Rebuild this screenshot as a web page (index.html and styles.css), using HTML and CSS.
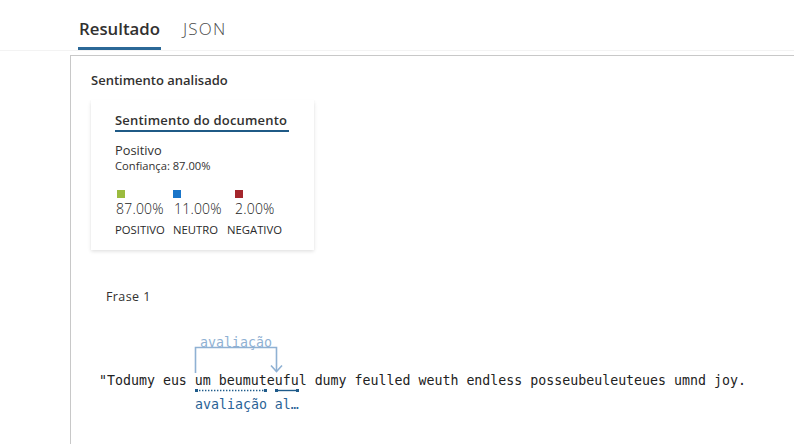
FILE: index.html
```html
<!DOCTYPE html>
<html lang="pt">
<head>
<meta charset="utf-8">
<link rel="stylesheet" href="styles.css">
</head>
<body>
<div class="tabs">
  <div class="tab active">Resultado</div>
  <div class="tab">JSON</div>
</div>
<div class="panel">
  <div class="section-title">Sentimento analisado</div>
  <div class="card">
    <div class="card-title">Sentimento do documento</div>
    <div class="label">Positivo</div>
    <div class="conf">Confiança: 87.00%</div>
    <div class="scores">
      <div class="score">
        <span class="swatch pos"></span>
        <span class="pct">87.00%</span>
        <span class="name">POSITIVO</span>
      </div>
      <div class="score">
        <span class="swatch neu"></span>
        <span class="pct">11.00%</span>
        <span class="name">NEUTRO</span>
      </div>
      <div class="score">
        <span class="swatch neg"></span>
        <span class="pct">2.00%</span>
        <span class="name">NEGATIVO</span>
      </div>
    </div>
  </div>
  <div class="frase">Frase 1</div>
  <div class="sentence">
    <span class="top-label">avaliação</span>
    <svg class="bracket" width="90" height="30" viewBox="0 0 90 30">
      <path d="M1.5 27 V1.5 H82.5 V25" fill="none" stroke="#8fb1d3" stroke-width="1.6"/>
      <path d="M77 19.5 L82.5 25.5 L88 19.5" fill="none" stroke="#8fb1d3" stroke-width="1.6"/>
    </svg>
    <span class="text">"Todumy eus um beumuteuful dumy feulled weuth endless posseubeuleuteues umnd joy.</span>
    <svg class="marks" width="110" height="6" viewBox="0 0 110 6">
      <rect x="0" y="1" width="3" height="3" fill="#1f5b8a"/>
      <line x1="4" y1="2.5" x2="69" y2="2.5" stroke="#1f5b8a" stroke-width="1.4" stroke-dasharray="1.4 1.6"/>
      <rect x="69" y="1" width="3" height="3" fill="#1f5b8a"/>
      <rect x="80" y="1" width="3" height="3" fill="#1f5b8a"/>
      <line x1="83" y1="2.5" x2="101" y2="2.5" stroke="#1f5b8a" stroke-width="1.4"/>
      <rect x="101" y="1" width="3" height="3" fill="#1f5b8a"/>
    </svg>
    <span class="bottom-label">avaliação al…</span>
  </div>
</div>
</body>
</html>
```
FILE: styles.css
```css
html, body {
  margin: 0;
  padding: 0;
  background: #fff;
}
body {
  font-family: "Open Sans", "Noto Sans", sans-serif;
  color: #323130;
  width: 794px;
  height: 444px;
  overflow: hidden;
}
.tabs {
  display: flex;
  gap: 22px;
  padding-left: 78px;
  height: 51px;
  border-bottom: 1px solid #f3f3f3;
  box-sizing: border-box;
  margin-bottom: 4px;
}
.tab {
  font-size: 17px;
  line-height: 20px;
  padding-top: 19px;
  color: #4d4d4d;
  font-weight: 300;
  letter-spacing: 1.2px;
}
.tab.active {
  color: #323130;
  font-weight: 600;
  font-size: 16.8px;
  letter-spacing: 0;
  border-bottom: 3px solid #2b6897;
  height: 28px;
  padding-left: 1px;
  padding-right: 1px;
}
.panel {
  margin-left: 70px;
  border-top: 1px solid #c8c8c8;
  border-left: 1px solid #c8c8c8;
  height: 400px;
  padding: 15px 0 0 20px;
  box-sizing: border-box;
}
.section-title {
  font-size: 13px;
  font-weight: 600;
  line-height: 18px;
}
.card {
  margin-top: 11px;
  width: 223px;
  height: 150px;
  box-sizing: border-box;
  padding: 12px 0 0 24px;
  box-shadow: 0 1.6px 3.6px rgba(0,0,0,0.13), 0 0.3px 0.9px rgba(0,0,0,0.11);
}
.card-title {
  width: fit-content;
  font-size: 13px;
  font-weight: 600;
  line-height: 17px;
  letter-spacing: 0.2px;
  padding-bottom: 1px;
  padding-right: 2px;
  border-bottom: 2px solid #1f5a86;
}
.label {
  margin-top: 10px;
  font-size: 12.8px;
  line-height: 16px;
}
.conf {
  font-size: 11.2px;
  line-height: 15px;
}
.scores {
  display: flex;
  margin-top: 17px;
}
.score {
  display: flex;
  flex-direction: column;
}
.score:nth-child(1) { width: 58px; }
.score:nth-child(2) { width: 54px; }
.swatch {
  width: 8px;
  height: 8px;
}
.score:nth-child(1) .swatch { margin-left: 2px; }
.score:nth-child(1) .pct { margin-left: 1px; }
.score:nth-child(2) .pct { margin-left: 1px; }
.score:nth-child(3) .swatch { margin-left: 8px; }
.score:nth-child(3) .pct { margin-left: 8px; }
.pos { background: #9bbb3e; }
.neu { background: #1a75c9; }
.neg { background: #a4262c; }
.pct {
  margin-top: 2px;
  font-size: 14px;
  font-weight: 300;
  line-height: 18px;
  letter-spacing: 0.2px;
  color: #222;
}
.name {
  margin-top: 4px;
  font-size: 11.3px;
  line-height: 16px;
  color: #2a2a2a;
}
.frase {
  margin-top: 39px;
  margin-left: 15px;
  font-size: 12.5px;
  line-height: 16px;
  letter-spacing: 0.4px;
}
.sentence {
  position: relative;
  margin-top: 68px;
  margin-left: 8px;
  font-family: "DejaVu Sans Mono", "Liberation Mono", monospace;
  font-size: 13.28px;
  line-height: 16px;
  white-space: nowrap;
}
.text {
  color: #222;
}
.top-label {
  position: absolute;
  left: 101px;
  top: -38px;
  color: #8fb1d3;
}
.bracket {
  position: absolute;
  left: 95px;
  top: -27px;
}
.marks {
  position: absolute;
  left: 96px;
  top: 15px;
}
.bottom-label {
  position: absolute;
  left: 96px;
  top: 24px;
  color: #2a6396;
}
```
